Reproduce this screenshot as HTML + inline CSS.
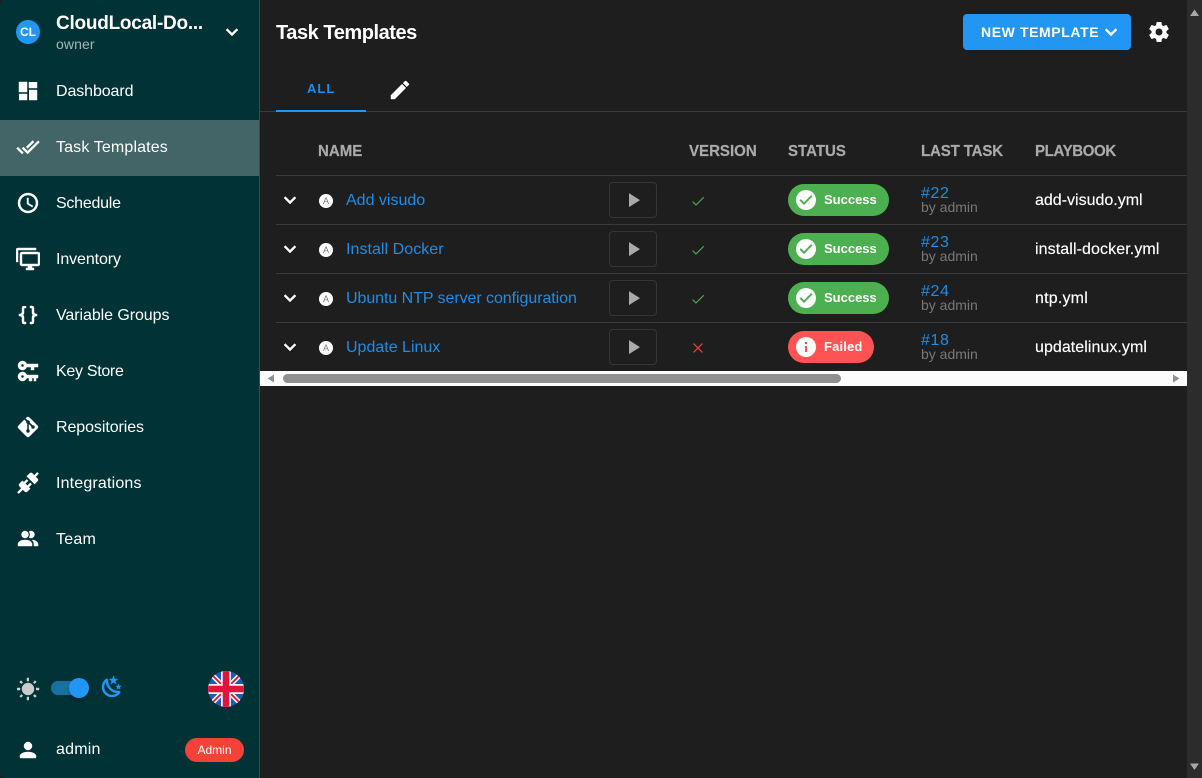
<!DOCTYPE html>
<html lang="en"><head><meta charset="utf-8"><title>Task Templates</title>
<style>
html,body{margin:0;padding:0;width:1202px;height:778px;overflow:hidden;background:#1e1e1e;font-family:"Liberation Sans",Arial,sans-serif;color:#fff}
.t{position:absolute;white-space:nowrap;line-height:20px;height:20px}
svg.i{position:absolute;width:24px;height:24px;fill:#fff}
svg.b path{stroke:#fff;stroke-width:.45}
.box{position:absolute}
.n{font-size:16px;left:56px}
.h{font-size:16px;font-weight:700;color:#aaa;transform:scaleX(.94);transform-origin:0 50%;-webkit-text-stroke:.2px #aaa}
.l{font-size:16px;color:#1f8ce6}
.p{font-size:16px;left:1035px;font-weight:400;-webkit-text-stroke:.15px #fff}
.by{font-size:14px;color:#787878;left:921px;line-height:14px;height:14px}
.hash{font-size:16px;color:#1f8ce6;left:921px;line-height:18px;height:18px;letter-spacing:.6px}
.chip{position:absolute;height:32px;border-radius:16px;left:788px}
.cht{position:absolute;left:36px;top:7px;font-size:13px;font-weight:700;line-height:18px;white-space:nowrap}
.line{position:absolute;left:276px;width:911px;height:1px;background:#3b3b3b}
.play{position:absolute;left:609px;width:46px;height:34px;border:1px solid #353535;border-radius:4px}
.a{position:absolute;left:319px;width:14px;height:14px;border-radius:50%;background:#fff;color:#777;font-size:9px;line-height:14px;text-align:center}
</style></head><body>

<div class="box" style="left:0;top:0;width:259px;height:778px;background:#003236;border-radius:5px 0 0 5px"></div>
<div class="box" style="left:259px;top:0;width:1px;height:778px;background:#3d4a4c"></div>
<div class="box" style="left:0;top:120px;width:259px;height:56px;background:#436568"></div>

<div class="box" style="left:16px;top:20px;width:24px;height:24px;border-radius:50%;background:#2196f3;font-size:12px;font-weight:700;line-height:24px;text-align:center">CL</div>
<div class="t" style="left:56px;top:14px;font-size:19px;font-weight:700;letter-spacing:-.25px">CloudLocal-Do...</div>
<div class="t" style="left:56px;top:34px;font-size:14px;color:#a9b6b7;letter-spacing:.1px">owner</div>
<svg class="i b" style="left:220px;top:20px" viewBox="0 0 24 24"><path d="M7.41,8.58L12,13.17L16.59,8.58L18,10L12,16L6,10L7.41,8.58Z"/></svg>

<svg class="i b" style="left:16px;top:79px" viewBox="0 0 24 24"><path d="M13,3V9H21V3M13,21H21V11H13M3,21H11V15H3M3,13H11V3H3V13Z"/></svg>
<div class="t n" style="top:82px;letter-spacing:-.1px">Dashboard</div>
<svg class="i b" style="left:16px;top:135px" viewBox="0 0 24 24"><path d="M0.41,13.41L6,19L7.41,17.58L1.83,12M22.24,5.58L11.66,16.17L7.5,12L6.07,13.41L11.66,19L23.66,7M18,7L16.59,5.58L10.24,11.93L11.66,13.34L18,7Z"/></svg>
<div class="t n" style="top:138px;letter-spacing:.14px">Task Templates</div>
<svg class="i b" style="left:16px;top:191px" viewBox="0 0 24 24"><path d="M12,20A8,8 0 0,0 20,12A8,8 0 0,0 12,4A8,8 0 0,0 4,12A8,8 0 0,0 12,20M12,2A10,10 0 0,1 22,12A10,10 0 0,1 12,22C6.47,22 2,17.5 2,12A10,10 0 0,1 12,2M12.5,7V12.25L17,14.92L16.25,16.15L11,13V7H12.5Z"/></svg>
<div class="t n" style="top:194px;letter-spacing:-.25px">Schedule</div>
<svg class="i b" style="left:16px;top:247px" viewBox="0 0 24 24"><path d="M22,17V7H6V17H22M22,5A2,2 0 0,1 24,7V17C24,18.11 23.1,19 22,19H16V21H18V23H10V21H12V19H6C4.89,19 4,18.11 4,17V7A2,2 0 0,1 6,5H22M2,3V15H0V3A2,2 0 0,1 2,1H20V3H2Z"/></svg>
<div class="t n" style="top:250px;letter-spacing:-.1px">Inventory</div>
<svg class="i b" style="left:16px;top:303px" viewBox="0 0 24 24"><path d="M8,3A2,2 0 0,0 6,5V9A2,2 0 0,1 4,11H3V13H4A2,2 0 0,1 6,15V19A2,2 0 0,0 8,21H10V19H8V14A2,2 0 0,0 6,12A2,2 0 0,0 8,10V5H10V3M16,3A2,2 0 0,1 18,5V9A2,2 0 0,0 20,11H21V13H20A2,2 0 0,0 18,15V19A2,2 0 0,1 16,21H14V19H16V14A2,2 0 0,1 18,12A2,2 0 0,1 16,10V5H14V3H16Z"/></svg>
<div class="t n" style="top:306px;letter-spacing:-.07px">Variable Groups</div>
<svg class="i b" style="left:16px;top:359px" viewBox="0 0 24 24"><path d="M6.5 2C8.46 2 10.13 3.25 10.74 5H22V8H18V11H15V8H10.74C10.13 9.75 8.46 11 6.5 11C4 11 2 9 2 6.5C2 4 4 2 6.5 2M6.5 5C5.67 5 5 5.67 5 6.5C5 7.33 5.67 8 6.5 8C7.33 8 8 7.33 8 6.5C8 5.67 7.33 5 6.5 5M6.5 13C8.46 13 10.13 14.25 10.74 16H22V19H20V22H18V19H16V22H13V19H10.74C10.13 20.75 8.46 22 6.5 22C4 22 2 20 2 17.5C2 15 4 13 6.5 13M6.5 16C5.67 16 5 16.67 5 17.5C5 18.33 5.67 19 6.5 19C7.33 19 8 18.33 8 17.5C8 16.67 7.33 16 6.5 16Z"/></svg>
<div class="t n" style="top:362px;letter-spacing:-.3px">Key Store</div>
<svg class="i b" style="left:16px;top:415px" viewBox="0 0 24 24"><path d="M2.6,10.59L8.38,4.8L10.07,6.5C9.83,7.35 10.22,8.28 11,8.73V14.27C10.4,14.61 10,15.26 10,16A2,2 0 0,0 12,18A2,2 0 0,0 14,16C14,15.26 13.6,14.61 13,14.27V9.41L15.07,11.5C15,11.65 15,11.82 15,12A2,2 0 0,0 17,14A2,2 0 0,0 19,12A2,2 0 0,0 17,10C16.82,10 16.65,10 16.5,10.07L13.93,7.5C14.19,6.57 13.71,5.55 12.78,5.16C12.35,5 11.9,4.96 11.5,5.07L9.8,3.38L10.59,2.6C11.37,1.81 12.63,1.81 13.41,2.6L21.4,10.59C22.19,11.37 22.19,12.63 21.4,13.41L13.41,21.4C12.63,22.19 11.37,22.19 10.59,21.4L2.6,13.41C1.81,12.63 1.81,11.37 2.6,10.59Z"/></svg>
<div class="t n" style="top:418px;letter-spacing:-.08px">Repositories</div>
<svg class="i b" style="left:16px;top:471px" viewBox="0 0 24 24"><path d="M21.4 7.5C22.2 8.3 22.2 9.6 21.4 10.3L18.6 13.1L10.8 5.3L13.6 2.5C14.4 1.7 15.7 1.7 16.4 2.5L18.2 4.3L21.2 1.3L22.6 2.7L19.6 5.7L21.4 7.5M15.6 13.3L14.2 11.9L11.4 14.7L9.3 12.6L12.1 9.8L10.7 8.4L7.9 11.2L6.4 9.8L3.6 12.6C2.8 13.4 2.8 14.7 3.6 15.4L5.4 17.2L1.4 21.2L2.8 22.6L6.8 18.6L8.6 20.4C9.4 21.2 10.7 21.2 11.4 20.4L14.2 17.6L12.8 16.2L15.6 13.3Z"/></svg>
<div class="t n" style="top:474px;letter-spacing:.17px">Integrations</div>
<svg class="i b" style="left:16px;top:527px" viewBox="0 0 24 24"><path d="M16 17V19H2V17S2 13 9 13 16 17 16 17M12.5 7.5A3.5 3.5 0 1 0 9 11A3.5 3.5 0 0 0 12.5 7.5M15.94 13A5.32 5.32 0 0 1 18 17V19H22V17S22 13.37 15.94 13M15 4A3.39 3.39 0 0 0 13.07 4.59A5 5 0 0 1 13.07 10.41A3.39 3.39 0 0 0 15 11A3.5 3.5 0 0 0 15 4Z"/></svg>
<div class="t n" style="top:530px;letter-spacing:.25px">Team</div>

<svg class="i" style="left:16px;top:677px;fill:#ccc" viewBox="0 0 24 24"><path stroke="#ccc" stroke-width=".5" d="M3.55 19.09L4.96 20.5L6.76 18.71L5.34 17.29M12 6C8.69 6 6 8.69 6 12S8.69 18 12 18 18 15.31 18 12C18 8.68 15.31 6 12 6M20 13H23V11H20M17.24 18.71L19.04 20.5L20.45 19.09L18.66 17.29M20.45 5L19.04 3.6L17.24 5.39L18.66 6.81M13 1H11V4H13M6.76 5.39L4.96 3.6L3.55 5L5.34 6.81L6.76 5.39M1 13H4V11H1M13 20H11V23H13"/></svg>
<div class="box" style="left:51px;top:681px;width:36px;height:14px;border-radius:7px;background:#17719f"></div>
<div class="box" style="left:69px;top:678px;width:20px;height:20px;border-radius:50%;background:#2196f3;box-shadow:0 2px 3px rgba(0,0,0,.25)"></div>
<svg class="i" style="left:100px;top:675px;fill:#2196f3" viewBox="0 0 24 24"><path stroke="#2196f3" stroke-width=".5" d="M17.75,4.09L15.22,6.03L16.13,9.09L13.5,7.28L10.87,9.09L11.78,6.03L9.25,4.09L12.44,4L13.5,1L14.56,4L17.75,4.09M21.25,11L19.61,12.25L20.2,14.23L18.5,13.06L16.8,14.23L17.39,12.25L15.75,11L17.81,10.95L18.5,9L19.19,10.95L21.25,11M18.97,15.95C19.8,15.87 20.69,17.05 20.16,17.8C19.84,18.25 19.5,18.67 19.08,19.07C15.17,23 8.84,23 4.94,19.07C1.03,15.17 1.03,8.83 4.94,4.93C5.34,4.53 5.76,4.17 6.21,3.85C6.96,3.32 8.14,4.21 8.06,5.04C7.79,7.9 8.75,10.87 10.95,13.06C13.14,15.26 16.1,16.22 18.97,15.95M17.33,17.97C14.5,17.81 11.7,16.64 9.53,14.5C7.36,12.31 6.2,9.5 6.04,6.68C3.23,9.82 3.34,14.64 6.35,17.66C9.37,20.67 14.19,20.78 17.33,17.97Z"/></svg>

<svg class="box" style="left:208px;top:671px" width="36" height="36" viewBox="0 0 36 36">
<defs><clipPath id="c"><circle cx="18" cy="18" r="18"/></clipPath></defs>
<g clip-path="url(#c)"><rect width="36" height="36" fill="#1f5bb5"/>
<path d="M0 0L36 36M36 0L0 36" stroke="#f4f4f4" stroke-width="5"/>
<path d="M0 0L36 36M36 0L0 36" stroke="#e0143c" stroke-width="1.8"/>
<path d="M18 0V36M0 18H36" stroke="#f4f4f4" stroke-width="10"/>
<path d="M18 0V36M0 18H36" stroke="#e0143c" stroke-width="6.5"/></g></svg>

<svg class="i b" style="left:16px;top:738px" viewBox="0 0 24 24"><path d="M12,4A4,4 0 0,1 16,8A4,4 0 0,1 12,12A4,4 0 0,1 8,8A4,4 0 0,1 12,4M12,14C16.42,14 20,15.79 20,18V20H4V18C4,15.79 7.58,14 12,14Z"/></svg>
<div class="t n" style="top:740px;letter-spacing:.2px">admin</div>
<div class="box" style="left:185px;top:738px;width:59px;height:24px;border-radius:12px;background:#f44336;font-size:12px;line-height:24px;text-align:center">Admin</div>

<div class="t" style="left:276px;top:22px;font-size:20px;font-weight:700;line-height:22px;height:22px;letter-spacing:-.45px">Task Templates</div>
<div class="box" style="left:963px;top:14px;width:168px;height:36px;border-radius:4px;background:#2196f3"></div>
<div class="t" style="left:981px;top:22px;font-size:14px;font-weight:700;letter-spacing:.6px">NEW TEMPLATE</div>
<svg class="i b" style="left:1099px;top:20px" viewBox="0 0 24 24"><path d="M7.41,8.58L12,13.17L16.59,8.58L18,10L12,16L6,10L7.41,8.58Z"/></svg>
<svg class="i" style="left:1147px;top:20px" viewBox="0 0 24 24"><path d="M12,15.5A3.5,3.5 0 0,1 8.5,12A3.5,3.5 0 0,1 12,8.5A3.5,3.5 0 0,1 15.5,12A3.5,3.5 0 0,1 12,15.5M19.43,12.97C19.47,12.65 19.5,12.33 19.5,12C19.5,11.67 19.47,11.34 19.43,11L21.54,9.37C21.73,9.22 21.78,8.95 21.66,8.73L19.66,5.27C19.54,5.05 19.27,4.96 19.05,5.05L16.56,6.05C16.04,5.66 15.5,5.32 14.87,5.07L14.5,2.42C14.46,2.18 14.25,2 14,2H10C9.75,2 9.54,2.18 9.5,2.42L9.13,5.07C8.5,5.32 7.96,5.66 7.44,6.05L4.95,5.05C4.73,4.96 4.46,5.05 4.34,5.27L2.34,8.73C2.21,8.95 2.27,9.22 2.46,9.37L4.57,11C4.53,11.34 4.5,11.67 4.5,12C4.5,12.33 4.53,12.65 4.57,12.97L2.46,14.63C2.27,14.78 2.21,15.05 2.34,15.27L4.34,18.73C4.46,18.95 4.73,19.03 4.95,18.95L7.44,17.94C7.96,18.34 8.5,18.68 9.13,18.93L9.5,21.58C9.54,21.82 9.75,22 10,22H14C14.25,22 14.46,21.82 14.5,21.58L14.87,18.93C15.5,18.67 16.04,18.34 16.56,17.94L19.05,18.95C19.27,19.03 19.54,18.95 19.66,18.73L21.66,15.27C21.78,15.05 21.73,14.78 21.54,14.63L19.43,12.97Z"/></svg>

<div class="t" style="left:307px;top:79px;font-size:13px;font-weight:700;color:#1f8ce6;letter-spacing:1px">ALL</div>
<svg class="i b" style="left:388px;top:78px" viewBox="0 0 24 24"><path d="M20.71,7.04C21.1,6.65 21.1,6 20.71,5.63L18.37,3.29C18,2.9 17.35,2.9 16.96,3.29L15.12,5.12L18.87,8.87M3,17.25V21H6.75L17.81,9.93L14.06,6.18L3,17.25Z"/></svg>
<div class="box" style="left:260px;top:111px;width:927px;height:1px;background:#3a3a3a"></div>
<div class="box" style="left:276px;top:110px;width:90px;height:2px;background:#2196f3"></div>

<div class="t h" style="left:318px;top:142px">NAME</div>
<div class="t h" style="left:689px;top:142px">VERSION</div>
<div class="t h" style="left:788px;top:142px">STATUS</div>
<div class="t h" style="left:921px;top:142px;letter-spacing:-.15px">LAST TASK</div>
<div class="t h" style="left:1035px;top:142px;letter-spacing:-.4px">PLAYBOOK</div>

<div class="line" style="top:175px"></div>
<div class="line" style="top:224px"></div>
<div class="line" style="top:273px"></div>
<div class="line" style="top:322px"></div>

<!-- row 1 -->
<svg class="i b" style="left:278px;top:188px" viewBox="0 0 24 24"><path d="M7.41,8.58L12,13.17L16.59,8.58L18,10L12,16L6,10L7.41,8.58Z"/></svg>
<div class="a" style="top:194px">A</div>
<div class="t l" style="left:346px;top:191px">Add visudo</div>
<div class="play" style="top:182px"></div>
<svg class="i" style="left:621px;top:188px;fill:#aaa" viewBox="0 0 24 24"><path d="M8,5.14V19.14L19,12.14L8,5.14Z"/></svg>
<svg class="i" style="left:690px;top:193px;width:16px;height:16px;fill:#4caf50" viewBox="0 0 24 24"><path stroke="#4caf50" stroke-width=".5" d="M21,7L9,19L3.5,13.5L4.5,12.5L9,17L20,6Z"/></svg>
<div class="chip" style="top:184px;width:101px;background:#4caf50"><svg class="i" style="left:6px;top:4px" viewBox="0 0 24 24"><path d="M12 2A10 10 0 1 0 12 22A10 10 0 1 0 12 2M10 17L5.5 12.5L6.9 11.1L10 14.2L17.1 7.1L18.5 8.5Z"/></svg><span class="cht">Success</span></div>
<div class="t hash" style="top:185px">#22</div>
<div class="t by" style="top:200px">by admin</div>
<div class="t p" style="top:191px">add-visudo.yml</div>

<!-- row 2 -->
<svg class="i b" style="left:278px;top:237px" viewBox="0 0 24 24"><path d="M7.41,8.58L12,13.17L16.59,8.58L18,10L12,16L6,10L7.41,8.58Z"/></svg>
<div class="a" style="top:243px">A</div>
<div class="t l" style="left:346px;top:240px;letter-spacing:.05px">Install Docker</div>
<div class="play" style="top:231px"></div>
<svg class="i" style="left:621px;top:237px;fill:#aaa" viewBox="0 0 24 24"><path d="M8,5.14V19.14L19,12.14L8,5.14Z"/></svg>
<svg class="i" style="left:690px;top:242px;width:16px;height:16px;fill:#4caf50" viewBox="0 0 24 24"><path stroke="#4caf50" stroke-width=".5" d="M21,7L9,19L3.5,13.5L4.5,12.5L9,17L20,6Z"/></svg>
<div class="chip" style="top:233px;width:101px;background:#4caf50"><svg class="i" style="left:6px;top:4px" viewBox="0 0 24 24"><path d="M12 2A10 10 0 1 0 12 22A10 10 0 1 0 12 2M10 17L5.5 12.5L6.9 11.1L10 14.2L17.1 7.1L18.5 8.5Z"/></svg><span class="cht">Success</span></div>
<div class="t hash" style="top:234px">#23</div>
<div class="t by" style="top:249px">by admin</div>
<div class="t p" style="top:240px;letter-spacing:.1px">install-docker.yml</div>

<!-- row 3 -->
<svg class="i b" style="left:278px;top:286px" viewBox="0 0 24 24"><path d="M7.41,8.58L12,13.17L16.59,8.58L18,10L12,16L6,10L7.41,8.58Z"/></svg>
<div class="a" style="top:292px">A</div>
<div class="t l" style="left:346px;top:289px;letter-spacing:-.06px">Ubuntu NTP server configuration</div>
<div class="play" style="top:280px"></div>
<svg class="i" style="left:621px;top:286px;fill:#aaa" viewBox="0 0 24 24"><path d="M8,5.14V19.14L19,12.14L8,5.14Z"/></svg>
<svg class="i" style="left:690px;top:291px;width:16px;height:16px;fill:#4caf50" viewBox="0 0 24 24"><path stroke="#4caf50" stroke-width=".5" d="M21,7L9,19L3.5,13.5L4.5,12.5L9,17L20,6Z"/></svg>
<div class="chip" style="top:282px;width:101px;background:#4caf50"><svg class="i" style="left:6px;top:4px" viewBox="0 0 24 24"><path d="M12 2A10 10 0 1 0 12 22A10 10 0 1 0 12 2M10 17L5.5 12.5L6.9 11.1L10 14.2L17.1 7.1L18.5 8.5Z"/></svg><span class="cht">Success</span></div>
<div class="t hash" style="top:283px">#24</div>
<div class="t by" style="top:298px">by admin</div>
<div class="t p" style="top:289px;letter-spacing:.2px">ntp.yml</div>

<!-- row 4 -->
<svg class="i b" style="left:278px;top:335px" viewBox="0 0 24 24"><path d="M7.41,8.58L12,13.17L16.59,8.58L18,10L12,16L6,10L7.41,8.58Z"/></svg>
<div class="a" style="top:341px">A</div>
<div class="t l" style="left:346px;top:338px">Update Linux</div>
<div class="play" style="top:329px"></div>
<svg class="i" style="left:621px;top:335px;fill:#aaa" viewBox="0 0 24 24"><path d="M8,5.14V19.14L19,12.14L8,5.14Z"/></svg>
<svg class="i" style="left:689.5px;top:339.5px;width:16px;height:16px;fill:#f44336" viewBox="0 0 24 24"><path stroke="#f44336" stroke-width=".6" d="M19,6L18,5L12,11L6,5L5,6L11,12L5,18L6,19L12,13L18,19L19,18L13,12Z"/></svg>
<div class="chip" style="top:331px;width:86px;background:#ff5252"><svg class="i" style="left:6px;top:4px" viewBox="0 0 24 24"><path d="M13,9H11V7H13M13,17H11V11H13M12,2A10,10 0 0,0 2,12A10,10 0 0,0 12,22A10,10 0 0,0 22,12A10,10 0 0,0 12,2Z"/></svg><span class="cht" style="letter-spacing:.15px">Failed</span></div>
<div class="t hash" style="top:332px">#18</div>
<div class="t by" style="top:347px">by admin</div>
<div class="t p" style="top:338px;letter-spacing:.05px">updatelinux.yml</div>

<!-- horizontal scrollbar -->
<div class="box" style="left:260px;top:371px;width:927px;height:15px;background:#fcfcfc"></div>
<div class="box" style="left:283px;top:374px;width:558px;height:9px;border-radius:5px;background:#8f8f8f"></div>
<svg class="box" style="left:266px;top:373px" width="10" height="11" viewBox="0 0 10 11"><path d="M8 1.5V9.5L1.5 5.5Z" fill="#8f8f8f"/></svg>
<svg class="box" style="left:1171px;top:373px" width="10" height="11" viewBox="0 0 10 11"><path d="M2 1.5V9.5L8.5 5.5Z" fill="#8f8f8f"/></svg>

<!-- vertical scrollbar -->
<div class="box" style="left:1187px;top:0;width:15px;height:778px;background:#2c2c2c"></div>
<svg class="box" style="left:1189px;top:8px" width="11" height="10" viewBox="0 0 11 10"><path d="M5.5 1.5L10 8H1Z" fill="#a8a8a8"/></svg>
<svg class="box" style="left:1189px;top:762px" width="11" height="10" viewBox="0 0 11 10"><path d="M1 1.5H10L5.5 8Z" fill="#a8a8a8"/></svg>

</body></html>
